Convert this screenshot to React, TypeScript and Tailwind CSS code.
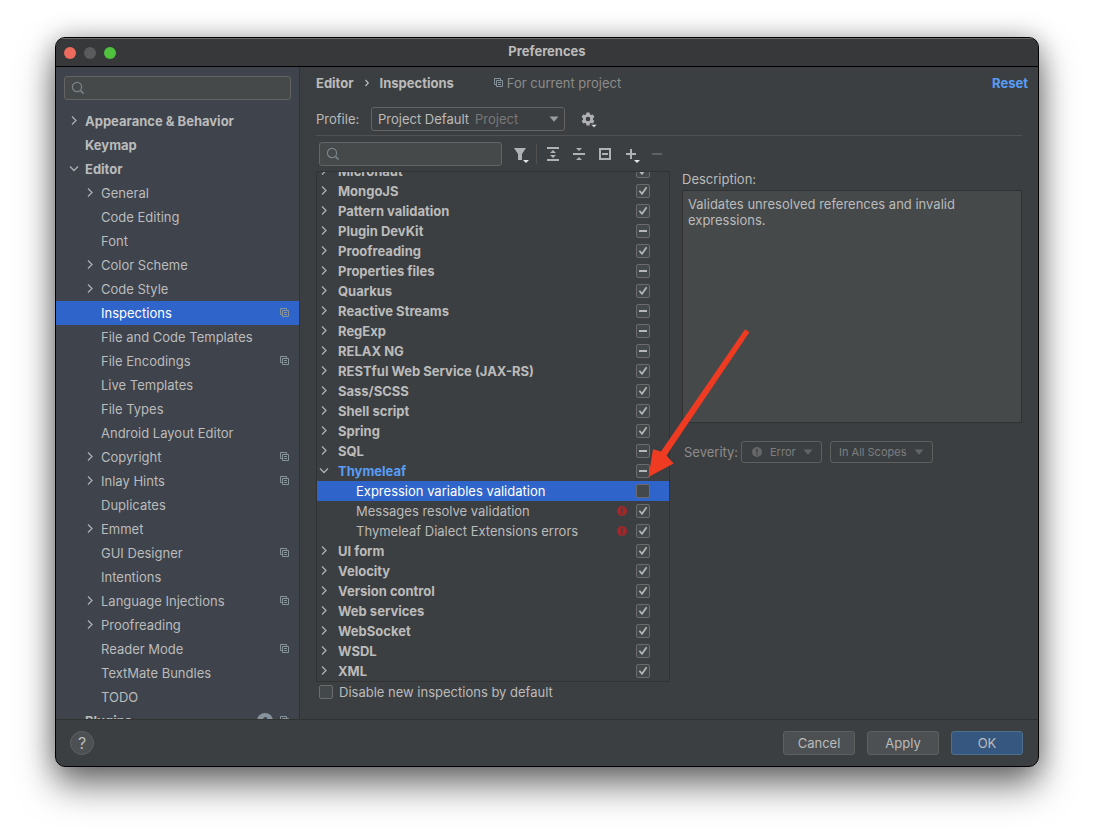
import { useLayoutEffect, useRef, type ReactNode } from "react";

type NavItem = {
  label: string;
  level: 1 | 2;
  arrow?: "right" | "down";
  project?: boolean;
  badge?: string;
  selected?: boolean;
};

const NAV: NavItem[] = [
  { label: "Appearance & Behavior", level: 1, arrow: "right" },
  { label: "Keymap", level: 1 },
  { label: "Editor", level: 1, arrow: "down" },
  { label: "General", level: 2, arrow: "right" },
  { label: "Code Editing", level: 2 },
  { label: "Font", level: 2 },
  { label: "Color Scheme", level: 2, arrow: "right" },
  { label: "Code Style", level: 2, arrow: "right" },
  { label: "Inspections", level: 2, project: true, selected: true },
  { label: "File and Code Templates", level: 2 },
  { label: "File Encodings", level: 2, project: true },
  { label: "Live Templates", level: 2 },
  { label: "File Types", level: 2 },
  { label: "Android Layout Editor", level: 2 },
  { label: "Copyright", level: 2, arrow: "right", project: true },
  { label: "Inlay Hints", level: 2, arrow: "right", project: true },
  { label: "Duplicates", level: 2 },
  { label: "Emmet", level: 2, arrow: "right" },
  { label: "GUI Designer", level: 2, project: true },
  { label: "Intentions", level: 2 },
  { label: "Language Injections", level: 2, arrow: "right", project: true },
  { label: "Proofreading", level: 2, arrow: "right" },
  { label: "Reader Mode", level: 2, project: true },
  { label: "TextMate Bundles", level: 2 },
  { label: "TODO", level: 2 },
  { label: "Plugins", level: 1, project: true, badge: "1" },
];

type CheckState = "on" | "off" | "mixed";

type Inspection = {
  label: string;
  state: CheckState;
  child?: boolean;
  open?: boolean;
  error?: boolean;
  selected?: boolean;
};

const INSPECTIONS: Inspection[] = [
  { label: "Micronaut", state: "on" },
  { label: "MongoJS", state: "on" },
  { label: "Pattern validation", state: "on" },
  { label: "Plugin DevKit", state: "mixed" },
  { label: "Proofreading", state: "on" },
  { label: "Properties files", state: "mixed" },
  { label: "Quarkus", state: "on" },
  { label: "Reactive Streams", state: "mixed" },
  { label: "RegExp", state: "mixed" },
  { label: "RELAX NG", state: "mixed" },
  { label: "RESTful Web Service (JAX-RS)", state: "on" },
  { label: "Sass/SCSS", state: "on" },
  { label: "Shell script", state: "on" },
  { label: "Spring", state: "on" },
  { label: "SQL", state: "mixed" },
  { label: "Thymeleaf", state: "mixed", open: true },
  { label: "Expression variables validation", state: "off", child: true, selected: true },
  { label: "Messages resolve validation", state: "on", child: true, error: true },
  { label: "Thymeleaf Dialect Extensions errors", state: "on", child: true, error: true },
  { label: "UI form", state: "on" },
  { label: "Velocity", state: "on" },
  { label: "Version control", state: "on" },
  { label: "Web services", state: "on" },
  { label: "WebSocket", state: "on" },
  { label: "WSDL", state: "on" },
  { label: "XML", state: "on" },
];

function Chevron({ dir }: { dir: "right" | "down" }) {
  return (
    <svg width="12" height="12" viewBox="0 0 12 12" fill="none" stroke="#adb0b2" strokeWidth="1.3" aria-hidden="true">
      <path d={dir === "right" ? "M4 1.5 8 5.5 4 9.5" : "M2 3.5 6 7.5 10 3.5"} />
    </svg>
  );
}

function ProjectIcon() {
  return (
    <svg width="10" height="10" viewBox="0 0 10 10" fill="none" stroke="#87939a" strokeWidth="1" aria-hidden="true">
      <path d="M2.5 6.5h-2v-6h6v2" />
      <path d="M2.5 2.5h6v6h-6zM4 4.5h3M4 6.5h3" />
    </svg>
  );
}

function SearchIcon() {
  return (
    <svg width="14" height="14" viewBox="0 0 14 14" fill="none" stroke="#79848b" strokeWidth="1.2" aria-hidden="true">
      <circle cx="6" cy="6" r="4.6" />
      <path d="M9.4 9.4 12.6 12.6" strokeWidth="1.5" />
    </svg>
  );
}

function ErrorIcon({ className }: { className: string }) {
  return (
    <svg width="10" height="10" viewBox="0 0 10 10" className={className} aria-hidden="true">
      <circle cx="5" cy="5" r="5" fill="currentColor" />
      <path d="M5 1.8v3.9M5 6.8v1.5" stroke="#3c3f41" strokeWidth="1.4" fill="none" />
    </svg>
  );
}

function DownTriangle({ className }: { className: string }) {
  return (
    <svg width="10" height="6" viewBox="0 0 10 6" className={className} aria-hidden="true">
      <path d="M.5.5h9L5 5.8z" fill="currentColor" />
    </svg>
  );
}

function SearchField({ label, className }: { label: string; className: string }) {
  return (
    <label
      className={`flex h-6 items-center gap-1 rounded-[3px] border border-[#646464] bg-[#45494a] pl-1.5 ${className}`}
    >
      <SearchIcon />
      <input type="text" aria-label={label} className="min-w-0 flex-1 bg-transparent outline-none" />
    </label>
  );
}

function CheckBox({ id, state }: { id: string; state: CheckState }) {
  const ref = useRef<HTMLInputElement>(null);
  useLayoutEffect(() => {
    if (ref.current) ref.current.indeterminate = state === "mixed";
  }, [state]);
  return (
    <span className="grid size-3.5 shrink-0">
      <input
        ref={ref}
        id={id}
        type="checkbox"
        defaultChecked={state === "on"}
        className="peer col-start-1 row-start-1 size-3.5 appearance-none rounded-[2px] border border-[#6b6b6b] bg-[#43494a]"
      />
      <svg
        viewBox="0 0 14 14"
        className="pointer-events-none invisible col-start-1 row-start-1 size-3.5 peer-checked:visible"
        fill="none"
        stroke="#b4b6b7"
        strokeWidth="1.7"
        aria-hidden="true"
      >
        <path d="M3.4 6.8 6 9.8 10.6 3.2" />
      </svg>
      <svg
        viewBox="0 0 14 14"
        className="pointer-events-none invisible col-start-1 row-start-1 size-3.5 peer-indeterminate:visible"
        aria-hidden="true"
      >
        <rect x="3" y="6" width="8" height="2" fill="#b4b6b7" />
      </svg>
    </span>
  );
}

function ToolButton({ label, disabled, children }: { label: string; disabled?: boolean; children: ReactNode }) {
  return (
    <button type="button" aria-label={label} disabled={disabled} className="grid h-6 w-[26px] place-items-center">
      <svg width="16" height="16" viewBox="0 0 16 16" fill="#afb1b3" className="overflow-visible" aria-hidden="true">
        {children}
      </svg>
    </button>
  );
}

function NavRow({ item }: { item: NavItem }) {
  return (
    <li>
      <a
        href="#"
        aria-current={item.selected ? "page" : undefined}
        className={`flex h-6 items-center gap-[5px] pr-[9px] ${item.level === 1 ? "pl-3 font-bold" : "pl-7"} ${
          item.selected ? "bg-[#2f65ca] text-white" : ""
        }`}
      >
        <span className="size-3 shrink-0">{item.arrow && <Chevron dir={item.arrow} />}</span>
        <span className="flex-1 truncate">{item.label}</span>
        {item.badge && (
          <span className="mr-0.5 grid size-4 place-items-center rounded-full bg-[#87939a] text-[11px] leading-4 text-[#3e434c]">
            {item.badge}
          </span>
        )}
        {item.project && <ProjectIcon />}
      </a>
    </li>
  );
}

function InspectionRow({ item, index }: { item: Inspection; index: number }) {
  const id = `inspection-${index}`;
  const tone = item.selected ? "bg-[#2f65ca] text-white" : item.open ? "text-[#589df6]" : "";
  return (
    <li className={`flex h-5 items-center pr-[19px] ${tone}`}>
      <span className={item.child ? "w-[39px]" : "w-[21px] pl-px"}>
        {!item.child && <Chevron dir={item.open ? "down" : "right"} />}
      </span>
      <label htmlFor={id} className={`flex-1 truncate ${item.child ? "" : "font-bold"}`}>
        {item.label}
      </label>
      {item.error && <ErrorIcon className="mr-[9px] text-[#a1282b]" />}
      <CheckBox id={id} state={item.state} />
    </li>
  );
}

function InspectionList() {
  const ref = useRef<HTMLUListElement>(null);
  useLayoutEffect(() => {
    if (ref.current) ref.current.scrollTop = ref.current.scrollHeight;
  }, []);
  return (
    <ul
      ref={ref}
      aria-label="Inspections"
      className="min-h-0 flex-1 overflow-y-auto border border-[#323232] [scrollbar-width:none]"
    >
      {INSPECTIONS.map((item, i) => (
        <InspectionRow key={item.label} item={item} index={i} />
      ))}
    </ul>
  );
}

function Sidebar() {
  return (
    <nav
      aria-label="Settings"
      className="flex w-[244px] shrink-0 flex-col overflow-hidden border-r border-[#323232] bg-[#3e434c] pt-[9px] leading-[19px]"
    >
      <SearchField label="Search settings" className="mr-2 ml-2 shrink-0" />
      <ul className="mt-[9px] min-h-0 flex-1 overflow-y-auto [scrollbar-width:none]">
        {NAV.map((item) => (
          <NavRow key={item.label} item={item} />
        ))}
      </ul>
    </nav>
  );
}

function Toolbar() {
  return (
    <div className="flex items-center pl-[3px]">
      <SearchField label="Search inspections" className="mr-1.5 w-[183px]" />
      <ToolButton label="Filter inspections">
        <path d="M1 2h12L9 8v6H5V8z" />
        <path d="M10 14h6l-3 3z" fill="#e4e6e8" />
      </ToolButton>
      <span className="mr-[3px] ml-0.5 h-5 w-px bg-[#515151]" />
      <ToolButton label="Expand all">
        <path d="M2 1h12v2H2zM2 13h12v2H2zM8 4l3 3H5zM8 12 5 9h6z" />
      </ToolButton>
      <ToolButton label="Collapse all">
        <path d="M2 7h12v2H2zM5 2h6L8 5zM8 11l3 3H5z" />
      </ToolButton>
      <ToolButton label="Reset to empty">
        <path d="M2 2h12v12H2zM4 4v8h8V4z" fillRule="evenodd" />
        <path d="M5 7h6v2H5z" />
      </ToolButton>
      <ToolButton label="Add inspection">
        <path d="M7 3h2v4h4v2H9v4H7V9H3V7h4z" />
        <path d="M11 14h6l-3 3z" fill="#e4e6e8" />
      </ToolButton>
      <ToolButton label="Remove inspection" disabled>
        <path d="M3 7h10v2H3z" fill="#5f6162" />
      </ToolButton>
    </div>
  );
}

function SmallSelect({ label, value, icon, className }: { label: string; value: string; icon?: boolean; className: string }) {
  return (
    <div className={`grid items-center text-[11px] text-[#7c7e7f] ${className}`}>
      <select
        aria-label={label}
        disabled
        className={`col-start-1 row-start-1 h-[22px] w-full appearance-none rounded-[3px] border border-[#5e6060] bg-transparent ${
          icon ? "pl-7" : "pl-2"
        }`}
      >
        <option>{value}</option>
      </select>
      {icon && <ErrorIcon className="pointer-events-none col-start-1 row-start-1 ml-[11px] text-[#646667]" />}
      <DownTriangle className="pointer-events-none col-start-1 row-start-1 mr-[9px] justify-self-end text-[#626566]" />
    </div>
  );
}

function Details() {
  return (
    <section className="flex min-w-0 flex-1 flex-col">
      <h2 id="description" className="h-[19px] leading-[17px]">
        Description:
      </h2>
      <div aria-labelledby="description" className="h-[233px] border border-[#323232] bg-[#45494a] px-[5px] py-[5px] leading-4">
        <p className="max-w-[290px]">Validates unresolved references and invalid expressions.</p>
      </div>
      <div className="mt-[18px] flex items-center pl-0.5 text-[#8c8c8c]">
        <span className="w-[57px]">Severity:</span>
        <SmallSelect label="Severity" value="Error" icon className="w-[81px]" />
        <SmallSelect label="Scope" value="In All Scopes" className="ml-2 w-[103px]" />
      </div>
    </section>
  );
}

function Gear() {
  return (
    <svg width="16" height="16" viewBox="0 0 16 16" fill="#afb1b3" className="overflow-visible" aria-hidden="true">
      <circle cx="8" cy="8" r="3.6" fill="none" stroke="#afb1b3" strokeWidth="2.6" />
      {[0, 60, 120, 180, 240, 300].map((angle) => (
        <path key={angle} d="M6.5 1.5h3l.6 2.8H5.9z" transform={`rotate(${angle} 8 8)`} />
      ))}
      <path d="M11 13.5h6l-3 3z" fill="#e4e6e8" stroke="#3c3f41" strokeWidth=".5" />
    </svg>
  );
}

function Main() {
  return (
    <main className="flex min-w-0 flex-1 flex-col pl-4">
      <header className="flex h-8 shrink-0 items-center pr-2.5">
        <nav aria-label="Breadcrumb" className="flex items-center font-bold">
          <a href="#">Editor</a>
          <svg width="6" height="8" viewBox="0 0 6 8" className="mx-2.5" fill="none" stroke="#bbbbbb" strokeWidth="1.2" aria-hidden="true">
            <path d="M1.5 1 4.3 4 1.5 7" />
          </svg>
          <span>Inspections</span>
        </nav>
        <span className="ml-10 flex items-center gap-[3px] text-[#8c8c8c]">
          <ProjectIcon />
          For current project
        </span>
        <a href="#" className="ml-auto font-bold text-[#589df6]">
          Reset
        </a>
      </header>
      <div className="flex min-h-0 flex-1 flex-col pr-4">
        <div className="mt-2 flex items-center border-b border-[#515151] pb-1">
          <label htmlFor="profile" className="w-[55px]">
            Profile:
          </label>
          <div className="grid w-[194px] items-center">
            <select
              id="profile"
              className="col-start-1 row-start-1 h-6 w-full appearance-none rounded-[3px] border border-[#646464] bg-transparent pl-1.5"
            >
              <option>Project Default</option>
            </select>
            <span className="pointer-events-none col-start-1 row-start-1 pl-[104px] text-[#787878]">Project</span>
            <DownTriangle className="pointer-events-none col-start-1 row-start-1 mr-1.5 justify-self-end text-[#9a9da0]" />
          </div>
          <button type="button" aria-label="Profile actions" className="ml-[15px]">
            <Gear />
          </button>
        </div>
        <div className="mt-1.5 flex min-h-0 flex-1 gap-3">
          <div className="flex w-[354px] shrink-0 flex-col">
            <Toolbar />
            <div className="mt-[5px] flex min-h-0 flex-1 flex-col">
              <InspectionList />
            </div>
            <div className="mt-[3px] mb-5 flex h-3.5 shrink-0 items-center gap-1.5 pl-[3px]">
              <CheckBox id="disable-new" state="off" />
              <label htmlFor="disable-new">Disable new inspections by default</label>
            </div>
          </div>
          <div className="flex min-w-0 flex-1 pt-[29px]">
            <Details />
          </div>
        </div>
      </div>
    </main>
  );
}

function Footer() {
  const base = "h-6 w-[72px] rounded-[3px] border";
  return (
    <footer className="flex h-[47px] shrink-0 items-center gap-3 border-t border-[#323232] pr-[15px] pl-3.5">
      <button
        type="button"
        aria-label="Help"
        className="mr-auto size-6 rounded-full border border-[#5e6060] bg-[#4c5052] text-base leading-none"
      >
        ?
      </button>
      <button type="button" className={`${base} border-[#5e6060] bg-[#4c5052]`}>
        Cancel
      </button>
      <button type="button" className={`${base} border-[#5e6060] bg-[#4c5052]`}>
        Apply
      </button>
      <button type="button" className={`${base} border-[#4c708c] bg-[#365880]`}>
        OK
      </button>
    </footer>
  );
}

function PointerArrow() {
  return (
    <svg
      width="104"
      height="152"
      viewBox="0 0 104 152"
      className="pointer-events-none absolute top-[290px] left-[592px]"
      fill="#ee3b22"
      aria-hidden="true"
    >
      <path d="M98 2.2 102.4 5.2 19.4 128.6 26.6 136.6 1.5 150 6 122.2 14 124.4z" />
    </svg>
  );
}

export default function App() {
  return (
    <div className="h-screen overflow-hidden bg-white px-[55px] pt-[37px] pb-[73px] font-['Inter','Liberation_Sans',sans-serif] text-[13px] leading-5 text-[#bbbbbb]">
      <div className="relative h-full rounded-[10px] shadow-[0_18px_36px_rgba(0,0,0,0.55),0_0_24px_rgba(0,0,0,0.25)]">
        <div className="flex h-full flex-col overflow-hidden rounded-[10px] border border-black bg-[#3c3f41]">
          <div className="grid h-[29px] shrink-0 grid-cols-[1fr_auto_1fr] items-center border-t border-b border-t-[#6a6b6c] border-b-black bg-[#373839] px-2">
            <div className="flex gap-2">
              <button type="button" aria-label="Close" className="size-3 rounded-full bg-[#ed6a5e]" />
              <button type="button" aria-label="Minimize" className="size-3 rounded-full bg-[#5a5b5c]" />
              <button type="button" aria-label="Zoom" className="size-3 rounded-full bg-[#4fc13e]" />
            </div>
            <h1 className="pb-0.5 leading-[19px] font-bold">Preferences</h1>
          </div>
          <div className="flex min-h-0 flex-1">
            <Sidebar />
            <Main />
          </div>
          <Footer />
        </div>
        <PointerArrow />
      </div>
    </div>
  );
}
